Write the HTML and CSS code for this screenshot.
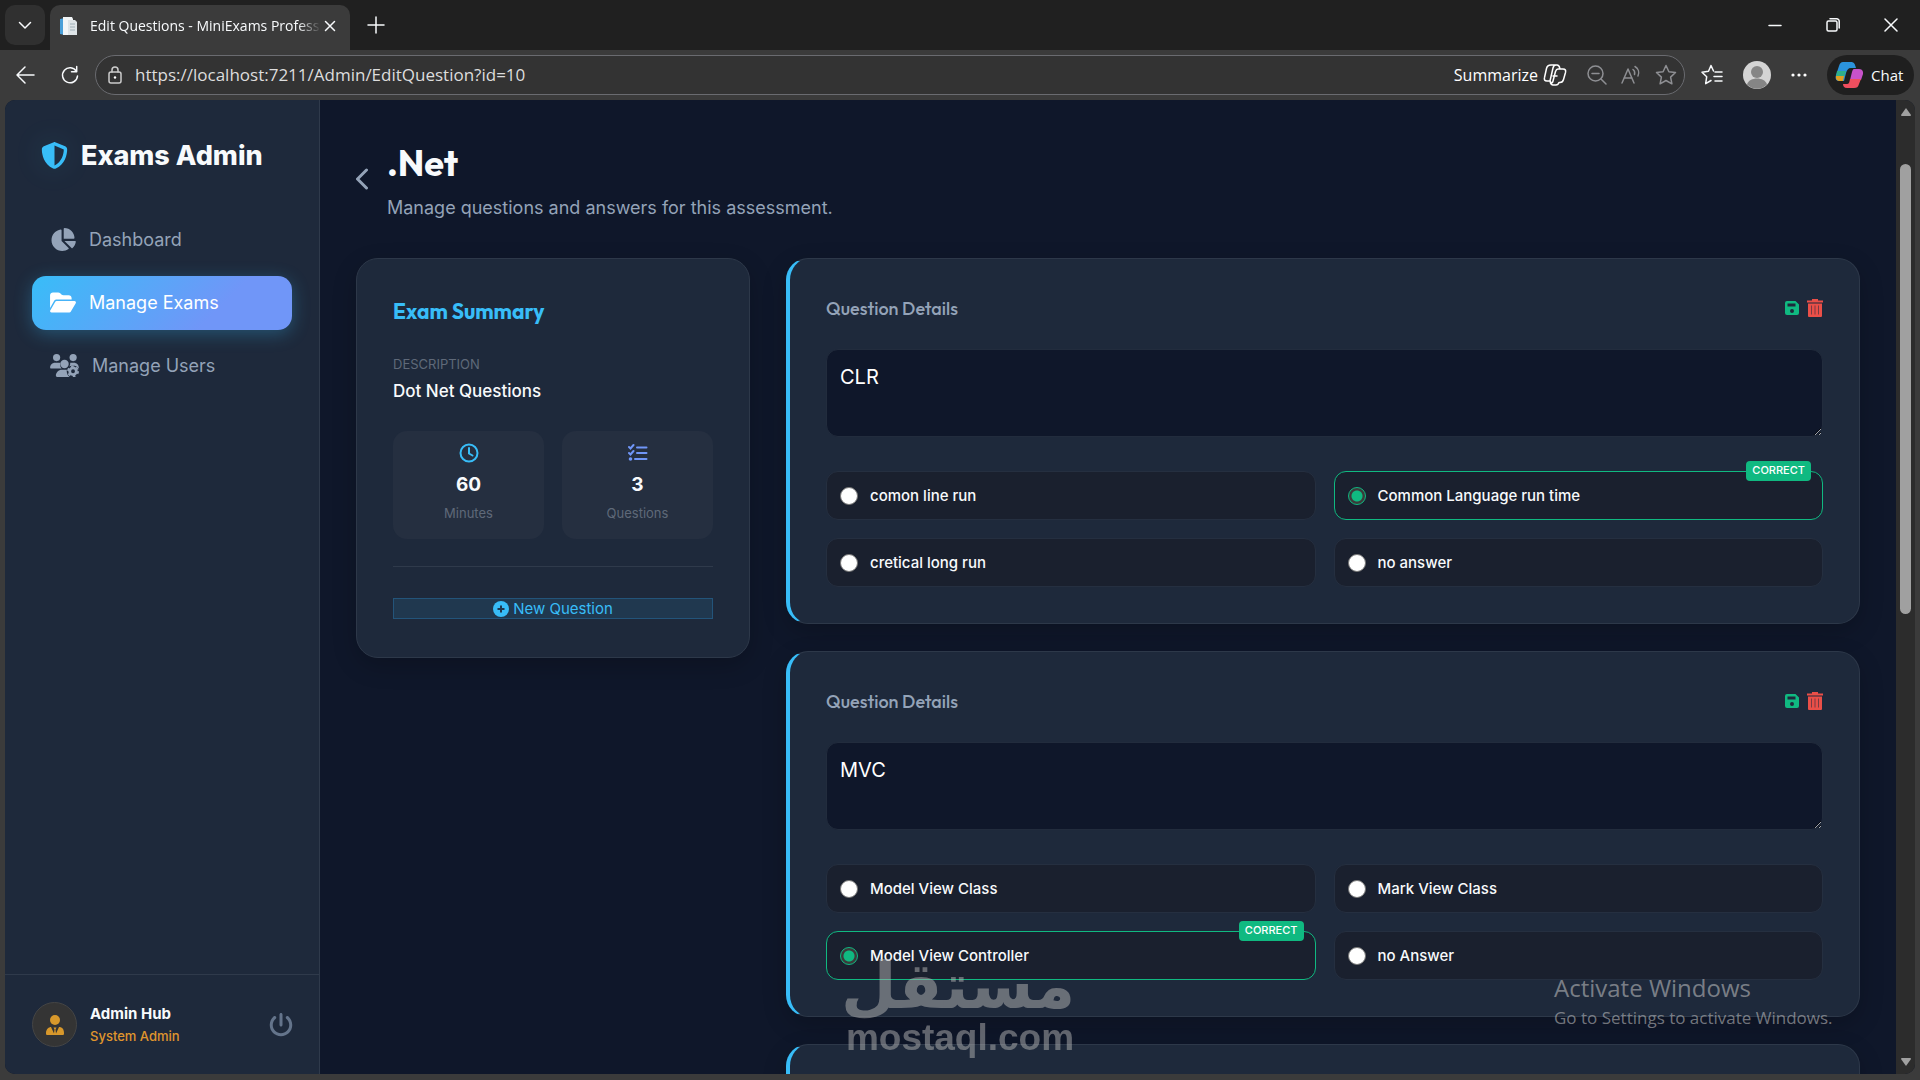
FILE: index.html
```html
<!DOCTYPE html>
<html lang="en">
<head>
    <meta charset="UTF-8">
    <title>Edit Questions - MiniExams Professional</title>
    <link rel="stylesheet" href="styles.css">
</head>
<body>

    <!-- Browser tabs -->
    <div class="tab-bar">
        <button class="tab-menu" aria-label="Tab actions">
            <svg width="14" height="14" viewBox="0 0 14 14"><path class="line" d="M1.500 4.500l5.500 5.500 5.500-5.500"/></svg>
        </button>
        <div class="tab">
            <svg width="20" height="20" viewBox="0 0 20 20">
                <path fill="#4a9fd8" d="M1 3l5-1v17l-5-1z"/>
                <path fill="#f2f5f7" d="M4 1h9l1 2v16H4z"/>
                <path fill="#dfe5e8" d="M9 4h7l2 2v13H9z"/>
                <path stroke="#9fb0b8" stroke-width="1" d="M11 8h5M11 11h5M11 14h5"/>
            </svg>
            <span class="tab-title">Edit Questions - MiniExams Professional</span>
            <button class="icon-btn" aria-label="Close tab">
                <svg width="12" height="12" viewBox="0 0 12 12"><path class="line" d="M1.500 1.500l9 9M10.500 1.500l-9 9"/></svg>
            </button>
        </div>
        <button class="icon-btn new-tab" aria-label="New tab">
            <svg width="18" height="18" viewBox="0 0 18 18"><path class="line" d="M9 1v16M1 9h16"/></svg>
        </button>
        <div class="window-buttons">
            <button class="icon-btn" aria-label="Minimize"><svg width="14" height="14" viewBox="0 0 14 14"><path class="line" d="M1 7.500h12"/></svg></button>
            <button class="icon-btn" aria-label="Restore"><svg width="14" height="14" viewBox="0 0 14 14"><rect class="line" x="1" y="3" width="10" height="10" rx="1.500"/><path class="line" d="M4 .8h6.500a2.500 2.500 0 0 1 2.700 2.700V10"/></svg></button>
            <button class="icon-btn" aria-label="Close"><svg width="14" height="14" viewBox="0 0 14 14"><path class="line" d="M1 1l12 12M13 1L1 13"/></svg></button>
        </div>
    </div>

    <!-- Address bar -->
    <div class="toolbar">
        <button class="icon-btn" aria-label="Back">
            <svg width="20" height="20" viewBox="0 0 20 20"><path class="line" d="M19 10H2M10 2l-8 8 8 8"/></svg>
        </button>
        <button class="icon-btn reload" aria-label="Reload">
            <svg width="18" height="20" viewBox="0 0 18 20"><path class="line" d="M15.500 6.500A7.500 7.500 0 1 0 16.500 11M15.700 1.500v5.200h-5.200"/></svg>
        </button>
        <div class="address">
            <svg width="16" height="18" viewBox="0 0 16 18"><rect class="line" x="2" y="6" width="12" height="11" rx="2"/><path class="line" d="M5 6V4a3 3 0 0 1 6 0v2"/><circle cx="8" cy="11.500" r="1.200" fill="#fff"/></svg>
            <input type="text" class="url" aria-label="Address" value="https://localhost:7211/Admin/EditQuestion?id=10">
            <button class="summarize">Summarize
                <svg width="24" height="22" viewBox="0 0 24 22"><path class="line" d="M8 1h6c2.500 0 2.500 2 3 4h3c2.500 0 3 1.500 2.500 3.500l-2 7c-.5 2-1.500 3-3.500 3h-1c-.7 2-1.500 2.500-3 2.500h-3c-2.500 0-2.500-2-3-4H4c-2.500 0-3-1.500-2.500-3.500l2-9C4 2 5.500 1 8 1zM13 1c-2 0-2.500 1-3 3L7 17M17 5h-2c-1.500 0-2 1-2.500 2.500L10 17c-.5 2-1 3-3 0M10 12h4"/></svg>
            </button>
            <button class="icon-btn dim" aria-label="Zoom out"><svg width="20" height="20" viewBox="0 0 20 20"><circle class="line" cx="8.500" cy="8.500" r="7.500"/><path class="line" d="M14 14l5 5M5 8.500h7"/></svg></button>
            <button class="icon-btn dim" aria-label="Read aloud"><svg width="20" height="20" viewBox="0 0 20 20"><path class="line" d="M1 18L7 4l6 14M3 13h8M12 4.500c1.500 1 2 3 1.500 5M14 1.500c3.500 2 4.500 6 3 9.500"/></svg></button>
            <button class="icon-btn dim" aria-label="Add to favorites"><svg width="22" height="22" viewBox="0 0 22 22"><path class="line" d="M11 1.500l2.900 6.200 6.600.8-4.900 4.600 1.300 6.700L11 16.500l-5.900 3.300 1.300-6.700L1.500 8.500l6.600-.8z"/></svg></button>
        </div>
        <button class="icon-btn" aria-label="Favorites">
            <svg width="22" height="22" viewBox="0 0 22 22"><path class="line" d="M12.500 7L10 1.500 7.500 7.200 1 8.200l4.700 4.500-1 7L10 16.500M14 8h7M13 12.500h8M14 17h7"/></svg>
        </button>
        <button class="icon-btn" aria-label="Profile">
            <svg width="28" height="28" viewBox="0 0 28 28"><circle cx="14" cy="14" r="14" fill="#d4d4d4"/><circle cx="14" cy="11" r="6" fill="#858585"/><path fill="#858585" d="M4 23.500c2-8 18-8 20 0A14 14 0 0 1 4 23.500z"/></svg>
        </button>
        <button class="icon-btn" aria-label="More">
            <svg width="16" height="16" viewBox="0 0 16 16" fill="#fff"><circle cx="2" cy="8" r="1.600"/><circle cx="8" cy="8" r="1.600"/><circle cx="14" cy="8" r="1.600"/></svg>
        </button>
        <button class="chat">
            <svg width="28" height="26" viewBox="0 0 28 26">
                <path fill="#2b93dc" d="M8 0h8c3 0 4 2 5 6h-5c-3 0-4 2-5 5l-2 8H5c-4 0-5-2-4-6L4 4c1-3 2-4 4-4z"/>
                <path fill="#2fb08a" d="M2 9h9l-2 6H1z"/>
                <path fill="#e0a021" d="M1 14h8l-1 5H5c-3 0-4.500-2-4-5z"/>
                <path fill="#c752c9" d="M19 7h5c3 0 4.500 2 4 5l-2 6H15l2-8c.4-1.500 1-3 2-3z"/>
                <path fill="#ee4e5e" d="M15 17h11l-2 5c-1 3-2 4-5 4h-7c-3 0-4-2-4-4h4c2 0 2.500-2 3-5z"/>
            </svg>
            Chat
        </button>
    </div>

    <div class="viewport">

        <!-- Sidebar -->
        <aside class="sidebar">
            <div class="brand">
                <svg class="brand-icon" width="27" height="27" viewBox="0 0 512 512"><path fill="currentColor" d="M256 0c4.600 0 9.200 1 13.400 2.900L457.700 82.800c22 9.300 38.400 31 38.300 57.200c-.5 99.200-41.300 280.700-213.600 363.200c-16.700 8-36.100 8-52.800 0C57.300 420.700 16.500 239.200 16 140c-.1-26.200 16.300-47.900 38.300-57.200L242.700 2.900C246.800 1 251.400 0 256 0zm0 66.800V444.800C394 378 431.100 230.100 432 141.400L256 66.800z"/></svg>
                <span>Exams Admin</span>
            </div>
            <nav class="menu">
                <a href="#">
                    <svg width="26" height="23" viewBox="0 0 576 512"><path fill="currentColor" d="M304 240V16.600c0-9 7-16.600 16-16.600C443.700 0 544 100.300 544 224c0 9-7.600 16-16.600 16H304zM32 272C32 150.700 122.100 50.300 239 34.300c9.200-1.300 17 6.100 17 15.400V288L412.500 444.500c6.700 6.700 6.200 17.700-1.500 23.100C371.800 495.600 323.800 512 272 512C139.500 512 32 404.600 32 272zm526.400 16c9.300 0 16.600 7.800 15.400 17c-7.700 55.900-34.600 105.600-73.900 142.300c-6 5.600-15.400 5.200-21.200-.7L320 288H558.400z"/></svg>
                    Dashboard
                </a>
                <a href="#" class="active">
                    <svg width="26" height="23" viewBox="0 0 576 512"><path fill="currentColor" d="M88.700 223.800L0 375.800V96C0 60.700 28.700 32 64 32H181.500c17 0 33.300 6.700 45.300 18.700l26.500 26.500c12 12 28.300 18.700 45.300 18.700H416c35.300 0 64 28.700 64 64v32H144c-22.800 0-43.800 12.100-55.300 31.800zm27.600 16.100C122.100 230 132.600 224 144 224H544c11.500 0 22 6.100 27.700 16.100s5.700 22.200-.1 32.100l-112 192C453.900 474 443.400 480 432 480H32c-11.500 0-22-6.100-27.700-16.100s-5.700-22.200 .1-32.100l112-192z"/></svg>
                    Manage Exams
                </a>
                <a href="#">
                    <svg width="29" height="23" viewBox="0 0 640 512">
                        <g fill="currentColor">
                            <circle cx="144" cy="80" r="80"/>
                            <circle cx="512" cy="80" r="80"/>
                            <circle cx="320" cy="224" r="94"/>
                            <path d="M107 192h85c11 0 22 2 32 6-8 60 8 90 32 122H21c-12 0-21-10-21-22 0-58 48-106 107-106zM448 196c10-3 22-4 32-4h52c58 0 107 48 107 106 0 8-4 14-9 18-30-40-70-60-120-60-30 0-50 8-80 22 12-24 20-50 18-82z"/>
                            <path d="M262 352h110c-10 60 10 120 60 160H155c-15 0-27-12-27-27 0-73 60-133 134-133z"/>
                        </g>
                        <circle cx="510" cy="384" r="74" fill="none" stroke="currentColor" stroke-width="62"/>
                        <circle cx="510" cy="384" r="112" fill="none" stroke="currentColor" stroke-width="42" stroke-dasharray="60 57.300"/>
                    </svg>
                    Manage Users
                </a>
            </nav>
            <div class="user">
                <span class="avatar">
                    <svg width="18" height="20" viewBox="0 0 18 20" fill="currentColor"><circle cx="9" cy="5" r="5"/><path d="M1 20c-1 0-1-1-1-2 0-4 3-6 5-6l3 6.500.5-4-1-2h3l-1 2 .5 4 3-6.500c3 0 5 2 5 6 0 1 0 2-1 2z"/></svg>
                </span>
                <div class="user-text">
                    <div class="user-name">Admin Hub</div>
                    <div class="user-role">System Admin</div>
                </div>
                <button class="icon-btn logout" aria-label="Log out">
                    <svg width="24" height="24" viewBox="0 0 512 512"><path fill="currentColor" d="M288 32c0-17.700-14.300-32-32-32s-32 14.300-32 32V256c0 17.700 14.300 32 32 32s32-14.300 32-32V32zM143.500 120.600c13.600-11.300 15.400-31.500 4.100-45.100s-31.500-15.400-45.100-4.100C49.700 115.400 16 181.800 16 256c0 132.500 107.500 240 240 240s240-107.500 240-240c0-74.200-33.800-140.600-86.600-184.600c-13.600-11.300-33.800-9.400-45.100 4.100s-9.400 33.800 4.100 45.100c38.900 32.300 63.500 81 63.500 135.400c0 97.200-78.800 176-176 176s-176-78.800-176-176c0-54.400 24.700-103.100 63.500-135.400z"/></svg>
                </button>
            </div>
        </aside>

        <main class="content">
            <header class="page-header">
                <a href="#" class="back" aria-label="Back to exams">
                    <svg width="13" height="22" viewBox="0 0 13 22"><path fill="none" stroke="currentColor" stroke-width="3" stroke-linecap="round" stroke-linejoin="round" d="M10.500 2L1.500 11l9 9"/></svg>
                </a>
                <div>
                    <h1>.Net</h1>
                    <p>Manage questions and answers for this assessment.</p>
                </div>
            </header>

            <div class="layout">
                <section class="card summary">
                    <h2>Exam Summary</h2>
                    <div class="label">DESCRIPTION</div>
                    <div class="description">Dot Net Questions</div>
                    <div class="stats">
                        <div class="stat">
                            <svg class="clock" width="20" height="24" viewBox="0 0 20 24"><g fill="none" stroke="currentColor" stroke-width="2" stroke-linecap="round"><circle cx="10" cy="12" r="8.500"/><path d="M10 7v5.500l3.500 2"/></g></svg>
                            <strong>60</strong>
                            <small>Minutes</small>
                        </div>
                        <div class="stat">
                            <svg class="checks" width="20" height="24" viewBox="0 0 20 24"><g fill="none" stroke="currentColor" stroke-width="2" stroke-linecap="round"><path d="M1 6l1.500 1.500L5.500 4M1 12l1.500 1.500 3-3.500M9 6.500h9.500M9 12h9.500M7 18h11.500"/></g><circle cx="2.500" cy="18" r="1.800" fill="currentColor"/></svg>
                            <strong>3</strong>
                            <small>Questions</small>
                        </div>
                    </div>
                    <hr>
                    <button class="new-question">
                        <svg width="16" height="16" viewBox="0 0 16 16"><circle cx="8" cy="8" r="8" fill="currentColor"/><path stroke="#20384f" stroke-width="2" d="M8 4.500v7M4.500 8h7"/></svg>
                        New Question
                    </button>
                </section>

                <div class="questions">
                    <form class="card question">
                        <div class="question-header">
                            <h3>Question Details</h3>
                            <button type="button" class="icon-btn save" aria-label="Save question">
                                <svg width="14" height="14" viewBox="0 0 14 14"><path fill="currentColor" fill-rule="evenodd" d="M2 0h8.500L14 3.500V12a2 2 0 0 1-2 2H2a2 2 0 0 1-2-2V2a2 2 0 0 1 2-2zM2.500 2.500V5.500h8V2.500zM7 8a2 2 0 1 0 0 4 2 2 0 0 0 0-4z"/></svg>
                            </button>
                            <button type="button" class="icon-btn delete" aria-label="Delete question">
                                <svg width="16" height="18" viewBox="0 0 16 18"><path fill="currentColor" d="M5 0h6v1.500h5v2H0v-2h5zM1 4.500h14V17a1 1 0 0 1-1 1H2a1 1 0 0 1-1-1z"/><path stroke="#7a3a42" stroke-width="1" d="M4.500 6.500v9M8 6.500v9M11.500 6.500v9"/></svg>
                            </button>
                        </div>
                        <textarea aria-label="Question text">CLR</textarea>
                        <div class="options">
                            <label class="option"><input type="radio" name="q1"> comon line run</label>
                            <label class="option correct"><input type="radio" name="q1" checked> Common Language run time <span class="badge">CORRECT</span></label>
                            <label class="option"><input type="radio" name="q1"> cretical long run</label>
                            <label class="option"><input type="radio" name="q1"> no answer</label>
                        </div>
                    </form>

                    <form class="card question">
                        <div class="question-header">
                            <h3>Question Details</h3>
                            <button type="button" class="icon-btn save" aria-label="Save question">
                                <svg width="14" height="14" viewBox="0 0 14 14"><path fill="currentColor" fill-rule="evenodd" d="M2 0h8.500L14 3.500V12a2 2 0 0 1-2 2H2a2 2 0 0 1-2-2V2a2 2 0 0 1 2-2zM2.500 2.500V5.500h8V2.500zM7 8a2 2 0 1 0 0 4 2 2 0 0 0 0-4z"/></svg>
                            </button>
                            <button type="button" class="icon-btn delete" aria-label="Delete question">
                                <svg width="16" height="18" viewBox="0 0 16 18"><path fill="currentColor" d="M5 0h6v1.500h5v2H0v-2h5zM1 4.500h14V17a1 1 0 0 1-1 1H2a1 1 0 0 1-1-1z"/><path stroke="#7a3a42" stroke-width="1" d="M4.500 6.500v9M8 6.500v9M11.500 6.500v9"/></svg>
                            </button>
                        </div>
                        <textarea aria-label="Question text">MVC</textarea>
                        <div class="options">
                            <label class="option"><input type="radio" name="q2"> Model View Class</label>
                            <label class="option"><input type="radio" name="q2"> Mark View Class</label>
                            <label class="option correct"><input type="radio" name="q2" checked> Model View Controller <span class="badge">CORRECT</span></label>
                            <label class="option"><input type="radio" name="q2"> no Answer</label>
                        </div>
                    </form>

                    <form class="card question"></form>
                </div>
            </div>
        </main>

        <div class="scrollbar">
            <svg width="10" height="8" viewBox="0 0 10 8"><path fill="#a0a0a0" d="M5 0l5 7q0 1-1 1H1Q0 8 0 7z"/></svg>
            <div class="track"><div class="thumb"></div></div>
            <svg width="10" height="8" viewBox="0 0 10 8"><path fill="#a0a0a0" d="M5 8l5-7q0-1-1-1H1Q0 0 0 1z"/></svg>
        </div>
    </div>

    <div class="watermark">
        <div class="watermark-ar" lang="ar" dir="rtl">مستقل</div>
        <div class="watermark-en">mostaql.com</div>
    </div>

    <div class="activate">
        <div class="activate-title">Activate Windows</div>
        <div>Go to Settings to activate Windows.</div>
    </div>

</body>
</html>
```
FILE: styles.css
```css
* {
    box-sizing: border-box;
}
body {
    margin: 0;
    height: 100vh;
    display: flex;
    flex-direction: column;
    overflow: hidden;
    position: relative;
    background-color: #3b3b3b;
    color: #f8fafc;
    font-family: Inter, sans-serif;
}
h1, h2, h3, p {
    margin: 0;
}
button {
    font-family: inherit;
    color: inherit;
    cursor: pointer;
}
a {
    color: inherit;
    text-decoration: none;
}
svg {
    display: block;
    flex-shrink: 0;
}
.line {
    fill: none;
    stroke: currentColor;
    stroke-width: 1.5;
    stroke-linecap: round;
    stroke-linejoin: round;
}
.icon-btn {
    background: none;
    border: none;
    padding: 0;
    display: flex;
    align-items: center;
}

/* browser tabs */
.tab-bar {
    height: 50px;
    flex-shrink: 0;
    display: flex;
    align-items: flex-end;
    background-color: #202020;
    padding: 0 6px 0 5px;
    font-family: "Open Sans", sans-serif;
}
.tab-menu {
    width: 40px;
    height: 40px;
    margin-bottom: 5px;
    border: none;
    border-radius: 10px;
    background-color: #303030;
    display: flex;
    align-items: center;
    justify-content: center;
}
.tab {
    width: 300px;
    height: 45px;
    margin-left: 5px;
    padding: 0 14px 4px 9px;
    display: flex;
    align-items: center;
    background-color: #3b3b3b;
    border-radius: 10px 10px 0 0;
}
.tab-title {
    flex: 1;
    margin: 0 3px 0 11px;
    overflow: hidden;
    white-space: nowrap;
    font-size: 14px;
    mask-image: linear-gradient(to right, #000 90%, transparent);
}
.new-tab {
    margin: 0 0 16px 17px;
}
.window-buttons {
    display: flex;
    gap: 44px;
    margin: 0 16px 18px auto;
}

/* address bar */
.toolbar {
    height: 50px;
    flex-shrink: 0;
    display: flex;
    align-items: center;
    gap: 20px;
    padding: 0 6px 0 15px;
    font-family: "Open Sans", sans-serif;
}
.reload {
    margin-left: 6px;
}
.address {
    flex: 1;
    height: 40px;
    margin: 0 -4px;
    padding: 0 7px 0 11px;
    display: flex;
    align-items: center;
    gap: 14px;
    border: 1px solid #6a6b70;
    border-radius: 20px;
    background-color: #333333;
    color: #cccccc;
}
.url {
    flex: 1;
    min-width: 0;
    margin-left: -2px;
    padding: 0 0 2px;
    border: none;
    outline: none;
    background: none;
    color: #dddddd;
    font-family: inherit;
    font-size: 17px;
}
.summarize {
    display: flex;
    align-items: center;
    gap: 5px;
    margin-right: 6px;
    padding: 0;
    border: none;
    background: none;
    color: #ffffff;
    font-size: 16px;
}
.dim {
    color: #8e8f93;
}
.chat {
    width: 87px;
    height: 40px;
    padding: 0 8px;
    display: flex;
    align-items: center;
    gap: 8px;
    border: none;
    border-radius: 20px;
    background-color: #1f1f1f;
    font-size: 15px;
}

/* page */
.viewport {
    flex: 1;
    min-height: 0;
    display: flex;
    margin: 0 5px 6px;
    border-radius: 10px;
    overflow: hidden;
    background-color: #0f172a;
}
.sidebar {
    width: 315px;
    flex-shrink: 0;
    display: flex;
    flex-direction: column;
    background-color: #1e293b;
    border-right: 1px solid #2f3a4b;
}
.brand {
    display: flex;
    align-items: center;
    gap: 13px;
    height: 113px;
    padding: 36px 36px 38px;
    font-size: 27px;
    font-weight: 800;
}
.brand-icon {
    color: #38bdf8;
    filter: drop-shadow(0 0 14px rgba(56, 189, 248, 0.15));
}
.menu {
    flex: 1;
    display: flex;
    flex-direction: column;
    gap: 9px;
    padding: 0 27px;
}
.menu a {
    height: 54px;
    padding: 0 18px 2px;
    display: flex;
    align-items: center;
    gap: 13px;
    border-radius: 14px;
    color: #94a3b8;
    font-size: 18px;
}
.menu .active {
    color: #ffffff;
    background: linear-gradient(135deg, #38bdf8, #7096f8 70%);
    box-shadow: 0 4px 18px rgba(56, 189, 248, 0.3);
}
.user {
    height: 100px;
    padding: 0 26px 0 27px;
    display: flex;
    align-items: center;
    gap: 13px;
    border-top: 1px solid #2f3a4b;
}
.avatar {
    width: 45px;
    height: 45px;
    display: flex;
    align-items: center;
    justify-content: center;
    border: 1px solid #454545;
    border-radius: 50%;
    background-color: #343434;
    color: #d8982b;
}
.user-text {
    flex: 1;
}
.user-name {
    font-size: 15px;
    font-weight: 700;
    line-height: 22px;
}
.user-role {
    color: #e0962d;
    font-size: 13px;
    font-weight: 500;
    line-height: 22px;
}
.logout {
    color: #64748b;
}

.content {
    flex: 1;
    min-width: 0;
    padding: 36px;
    overflow: hidden;
}
.page-header {
    display: flex;
    align-items: center;
    gap: 18px;
    margin-bottom: 31px;
}
.back {
    padding-bottom: 6px;
    color: #94a3b8;
}
h1, h2, h3 {
    font-family: Outfit, Lato, sans-serif;
}
h1 {
    font-size: 36px;
    font-weight: 700;
    line-height: 53px;
}
.page-header p {
    color: #94a3b8;
    font-size: 18px;
    line-height: 38px;
}
.layout {
    display: grid;
    grid-template-columns: 394px minmax(0, 1fr);
    gap: 36px;
    align-items: start;
}
.card {
    padding: 36px;
    background-color: #1e293b;
    border: 1px solid #2d3849;
    border-radius: 22px;
    box-shadow: 0 8px 24px rgba(0, 0, 0, 0.2);
}
.summary {
    padding-bottom: 38px;
}
.summary h2 {
    color: #38bdf8;
    font-size: 21px;
    font-weight: 700;
    line-height: 32px;
    margin-bottom: 27px;
}
.label {
    color: #5f6979;
    font-size: 13px;
    line-height: 20px;
    margin-bottom: 4px;
}
.description {
    font-size: 17px;
    font-weight: 500;
    line-height: 26px;
    margin-bottom: 27px;
}
.stats {
    display: grid;
    grid-template-columns: 1fr 1fr;
    gap: 18px;
}
.stat {
    height: 108px;
    padding-top: 10px;
    display: flex;
    flex-direction: column;
    align-items: center;
    border-radius: 14px;
    background-color: #252f40;
}
.stat strong {
    margin: 8px 0 6px;
    font-size: 19px;
    line-height: 24px;
}
.stat small {
    color: #5f6979;
    font-size: 13px;
    line-height: 20px;
}
.clock {
    color: #38bdf8;
}
.checks {
    color: #7096f8;
}
hr {
    margin: 27px 0 31px;
    border: none;
    border-top: 1px solid #2f3a4b;
}
.new-question {
    width: 100%;
    height: 21px;
    display: flex;
    align-items: center;
    justify-content: center;
    gap: 4px;
    padding: 0;
    border: 1px solid #23547a;
    background-color: #20384f;
    color: #38bdf8;
    font-size: 15px;
}

.questions {
    display: flex;
    flex-direction: column;
    gap: 27px;
}
.question {
    min-height: 366px;
    border-left: 4px solid #38bdf8;
}
.question-header {
    height: 26px;
    display: flex;
    align-items: center;
    gap: 8px;
    margin-bottom: 28px;
}
h3 {
    flex: 1;
    color: #94a3b8;
    font-size: 18px;
    font-weight: 500;
}
.save {
    color: #10b981;
}
.delete {
    color: #ea4f48;
}
textarea {
    display: block;
    width: 100%;
    height: 88px;
    padding: 13px;
    border: 1px solid #222c3d;
    border-radius: 12px;
    background-color: #0f172a;
    color: #ffffff;
    font-family: inherit;
    font-size: 20px;
    line-height: 28px;
}
.options {
    display: grid;
    grid-template-columns: 1fr 1fr;
    gap: 18px;
    margin-top: 34px;
}
.option {
    position: relative;
    height: 49px;
    padding: 0 13px;
    display: flex;
    align-items: center;
    gap: 12px;
    border: 1px solid #252f40;
    border-radius: 12px;
    background-color: #1a202e;
    font-size: 15px;
    font-weight: 500;
}
.option input {
    appearance: none;
    width: 18px;
    height: 18px;
    margin: 0;
    border: 1px solid #767676;
    border-radius: 50%;
    background-color: #ffffff;
}
.option input:checked {
    border-color: #10b981;
    background: radial-gradient(circle, #10b981 5px, #3b3b3b 6px);
}
.option.correct {
    border-color: #10b981;
}
.badge {
    position: absolute;
    top: -11px;
    right: 11px;
    height: 20px;
    padding: 0 6px;
    border-radius: 4px;
    background-color: #10b981;
    color: #ffffff;
    font-size: 11px;
    font-weight: 500;
    line-height: 19px;
}

.scrollbar {
    width: 19px;
    flex-shrink: 0;
    display: flex;
    flex-direction: column;
    align-items: center;
    padding: 8px 0;
    background-color: #2c2c2c;
}
.track {
    flex: 1;
    padding-top: 48px;
}
.thumb {
    width: 11px;
    height: 450px;
    border-radius: 6px;
    background-color: #a0a0a0;
}

/* overlays */
.watermark {
    position: absolute;
    left: 845px;
    bottom: 18px;
    width: 230px;
    text-align: center;
    white-space: nowrap;
    color: #b4b4b4;
    opacity: 0.5;
    font-weight: 700;
    pointer-events: none;
}
.watermark-ar {
    font-family: "DejaVu Sans", sans-serif;
    font-size: 64px;
    line-height: 56px;
}
.watermark-en {
    font-family: "Liberation Sans", sans-serif;
    font-size: 37px;
    line-height: 48px;
}
.activate {
    position: absolute;
    right: 82px;
    bottom: 48px;
    width: 284px;
    white-space: nowrap;
    color: rgba(200, 200, 200, 0.55);
    font-family: "Open Sans", sans-serif;
    font-size: 17px;
    line-height: 28px;
    pointer-events: none;
}
.activate-title {
    font-size: 24px;
    line-height: 32px;
}
```
